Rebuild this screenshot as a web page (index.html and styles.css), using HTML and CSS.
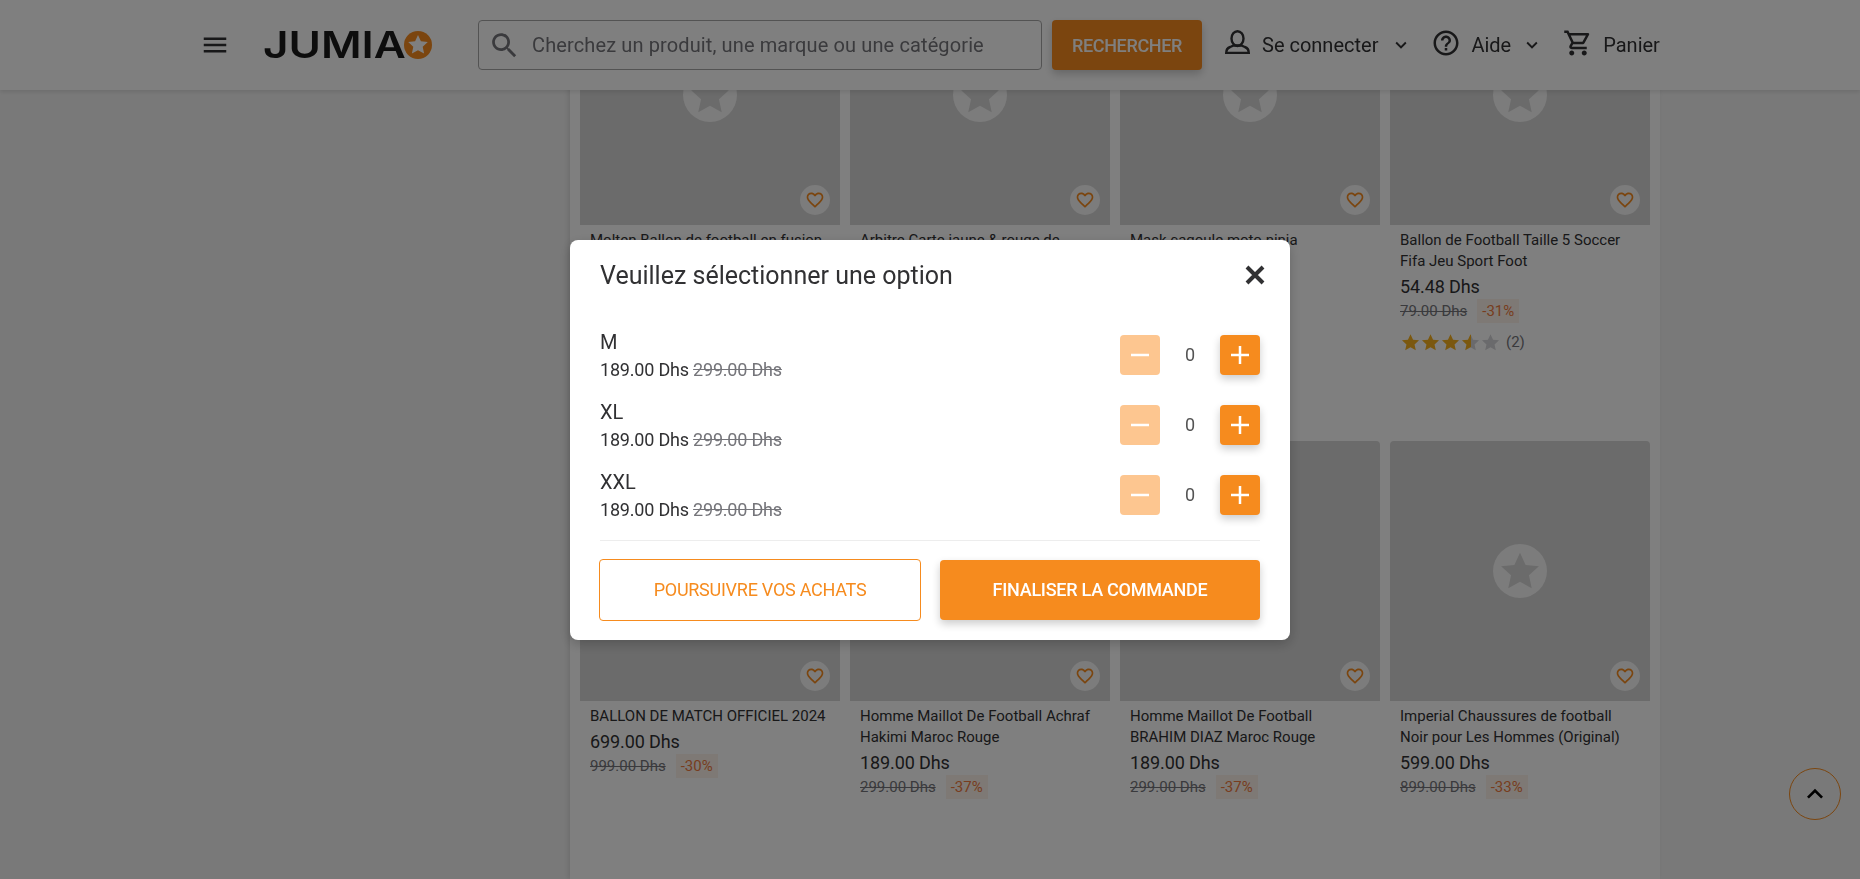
FILE: index.html
```html
<!DOCTYPE html>
<html lang="fr">
<head>
<meta charset="UTF-8">
<meta name="viewport" content="width=device-width, initial-scale=1.0">
<title>Jumia</title>
<link rel="stylesheet" href="styles.css">
</head>
<body>

<svg class="sprite" width="0" height="0">
<defs>
<linearGradient id="halfStar"><stop offset="50%" stop-color="#f6b01e"/><stop offset="50%" stop-color="#d4d4d8"/></linearGradient>
<symbol id="i-star" viewBox="0 0 24 24"><path d="M12 1.5l3.2 7 7.6.8-5.7 5.1 1.6 7.5-6.7-3.8-6.7 3.8 1.6-7.5L1.2 9.300l7.600-.8z"/></symbol>
<symbol id="i-heart" viewBox="0 0 24 24"><path d="M16.5 3c-1.740 0-3.410.81-4.500 2.090C10.910 3.810 9.240 3 7.500 3 4.420 3 2 5.420 2 8.500c0 3.780 3.400 6.860 8.550 11.540L12 21.350l1.450-1.320C18.600 15.360 22 12.280 22 8.500 22 5.420 19.580 3 16.500 3zm-4.400 15.550l-.1.1-.1-.1C7.140 14.240 4 11.390 4 8.500 4 6.500 5.500 5 7.500 5c1.540 0 3.040.99 3.570 2.360h1.870C13.460 5.990 14.960 5 16.500 5c2 0 3.500 1.500 3.500 3.500 0 2.890-3.140 5.740-7.900 10.050z"/></symbol>
<symbol id="i-chevron" viewBox="0 0 24 24"><path d="M16.590 8.590L12 13.170 7.410 8.590 6 10l6 6 6-6z"/></symbol>
<symbol id="i-minus" viewBox="0 0 18 18"><path d="M0 7.750h18v2.500H0z"/></symbol>
<symbol id="i-plus" viewBox="0 0 18 18"><path d="M0 7.750h7.750V0h2.500v7.750H18v2.500h-7.750V18h-2.500v-7.750H0z"/></symbol>
</defs>
</svg>

<header class="topbar">
<svg class="icon-menu" viewBox="0 0 24 24"><path d="M3 18h18v-2H3v2zm0-5h18v-2H3v2zm0-7v2h18V6H3z"/></svg>
<a class="logo">
<span class="logo-text">JUMIA</span>
<svg class="logo-star" viewBox="0 0 28 28"><circle cx="14" cy="14" r="14" fill="#f68b1e"/><path fill="#fff" d="M14 4l2.900 6.300 6.900.8-5.100 4.700 1.400 6.800-6.100-3.400-6.100 3.400 1.400-6.800-5.100-4.700 6.900-.8z"/></svg>
</a>
<div class="search">
<svg class="icon-search" viewBox="0 0 24 24"><path d="M15.500 14h-.79l-.28-.27C15.410 12.590 16 11.110 16 9.500 16 5.910 13.090 3 9.500 3S3 5.910 3 9.500 5.910 16 9.500 16c1.610 0 3.090-.59 4.230-1.570l.27.28v.79l5 4.990L20.490 19l-4.990-5zm-6 0C7.010 14 5 11.990 5 9.500S7.010 5 9.500 5 14 7.010 14 9.500 11.990 14 9.500 14z"/></svg>
<span class="search-text">Cherchez un produit, une marque ou une catégorie</span>
</div>
<button class="search-btn">RECHERCHER</button>
<div class="nav-item nav-account">
<svg class="icon-user" viewBox="0 0 25 24"><ellipse cx="12.500" cy="8.600" rx="6" ry="7.400" fill="none" stroke="#313133" stroke-width="2.400"/><path fill="none" stroke="#313133" stroke-width="2.400" d="M1.200 23c0-3 1-5 4-6l3.500-1.500h7.600l3.500 1.500c3 1 4 3 4 6z"/></svg>
<span>Se connecter</span>
<svg class="icon-chevron"><use href="#i-chevron"/></svg>
</div>
<div class="nav-item nav-help">
<svg class="icon-nav" viewBox="0 0 24 24"><path d="M11 18h2v-2h-2v2zm1-16C6.480 2 2 6.480 2 12s4.480 10 10 10 10-4.480 10-10S17.520 2 12 2zm0 18c-4.410 0-8-3.590-8-8s3.590-8 8-8 8 3.590 8 8-3.590 8-8 8zm0-14c-2.210 0-4 1.790-4 4h2c0-1.100.9-2 2-2s2 .9 2 2c0 2-3 1.750-3 5h2c0-2.250 3-2.500 3-5 0-2.210-1.790-4-4-4z"/></svg>
<span>Aide</span>
<svg class="icon-chevron"><use href="#i-chevron"/></svg>
</div>
<div class="nav-item nav-cart">
<svg class="icon-nav" viewBox="0 0 24 24"><path d="M15.550 13c.75 0 1.410-.41 1.750-1.030l3.580-6.490c.37-.66-.11-1.480-.87-1.480H5.210l-.94-2H1v2h2l3.600 7.590-1.350 2.440C4.520 15.370 5.480 17 7 17h12v-2H7l1.100-2h7.450zM6.160 6h12.150l-2.760 5H8.530L6.160 6zM7 18c-1.100 0-1.990.9-1.990 2S5.900 22 7 22s2-.9 2-2-.9-2-2-2zm10 0c-1.100 0-1.990.9-1.990 2s.89 2 1.990 2 2-.9 2-2-.9-2-2-2z"/></svg>
<span>Panier</span>
</div>
</header>

<div class="page">
<main class="panel">
<div class="grid">

<article class="card">
<div class="card-img"><span class="ph"><svg><use href="#i-star"/></svg></span><span class="fav"><svg><use href="#i-heart"/></svg></span></div>
<p class="card-title">Molten Ballon de football en fusion</p>
</article>

<article class="card">
<div class="card-img"><span class="ph"><svg><use href="#i-star"/></svg></span><span class="fav"><svg><use href="#i-heart"/></svg></span></div>
<p class="card-title">Arbitre Carte jaune &amp; rouge de</p>
</article>

<article class="card">
<div class="card-img"><span class="ph"><svg><use href="#i-star"/></svg></span><span class="fav"><svg><use href="#i-heart"/></svg></span></div>
<p class="card-title">Mask cagoule moto ninja</p>
</article>

<article class="card">
<div class="card-img"><span class="ph"><svg><use href="#i-star"/></svg></span><span class="fav"><svg><use href="#i-heart"/></svg></span></div>
<p class="card-title">Ballon de Football Taille 5 Soccer Fifa Jeu Sport Foot</p>
<p class="card-price">54.48 Dhs</p>
<div class="card-old"><s>79.00 Dhs</s><span class="badge">-31%</span></div>
<div class="rating">
<svg class="on"><use href="#i-star"/></svg>
<svg class="on"><use href="#i-star"/></svg>
<svg class="on"><use href="#i-star"/></svg>
<svg class="half"><use href="#i-star"/></svg>
<svg><use href="#i-star"/></svg>
<span>(2)</span>
</div>
</article>

<article class="card">
<div class="card-img"><span class="ph"><svg><use href="#i-star"/></svg></span><span class="fav"><svg><use href="#i-heart"/></svg></span></div>
<p class="card-title">BALLON DE MATCH OFFICIEL 2024</p>
<p class="card-price">699.00 Dhs</p>
<div class="card-old"><s>999.00 Dhs</s><span class="badge">-30%</span></div>
</article>

<article class="card">
<div class="card-img"><span class="ph"><svg><use href="#i-star"/></svg></span><span class="fav"><svg><use href="#i-heart"/></svg></span></div>
<p class="card-title">Homme Maillot De Football Achraf Hakimi Maroc Rouge</p>
<p class="card-price">189.00 Dhs</p>
<div class="card-old"><s>299.00 Dhs</s><span class="badge">-37%</span></div>
</article>

<article class="card">
<div class="card-img"><span class="ph"><svg><use href="#i-star"/></svg></span><span class="fav"><svg><use href="#i-heart"/></svg></span></div>
<p class="card-title">Homme Maillot De Football BRAHIM DIAZ Maroc Rouge</p>
<p class="card-price">189.00 Dhs</p>
<div class="card-old"><s>299.00 Dhs</s><span class="badge">-37%</span></div>
</article>

<article class="card">
<div class="card-img"><span class="ph"><svg><use href="#i-star"/></svg></span><span class="fav"><svg><use href="#i-heart"/></svg></span></div>
<p class="card-title">Imperial Chaussures de football Noir pour Les Hommes (Original)</p>
<p class="card-price">599.00 Dhs</p>
<div class="card-old"><s>899.00 Dhs</s><span class="badge">-33%</span></div>
</article>

</div>
</main>
</div>

<button class="to-top"><svg viewBox="0 0 24 24"><path d="M12 8l-6 6 1.410 1.410L12 10.830l4.590 4.580L18 14z"/></svg></button>

<div class="overlay">
<div class="modal">
<div class="modal-head">
<h2>Veuillez sélectionner une option</h2>
<svg class="modal-close" viewBox="0 0 20 20"><path d="M2 2l16 16M18 2L2 18"/></svg>
</div>

<div class="option">
<div class="option-info"><p class="option-name">M</p><p class="option-price">189.00 Dhs <s>299.00 Dhs</s></p></div>
<div class="stepper">
<button class="step step-off"><svg><use href="#i-minus"/></svg></button>
<span class="qty">0</span>
<button class="step"><svg><use href="#i-plus"/></svg></button>
</div>
</div>

<div class="option">
<div class="option-info"><p class="option-name">XL</p><p class="option-price">189.00 Dhs <s>299.00 Dhs</s></p></div>
<div class="stepper">
<button class="step step-off"><svg><use href="#i-minus"/></svg></button>
<span class="qty">0</span>
<button class="step"><svg><use href="#i-plus"/></svg></button>
</div>
</div>

<div class="option">
<div class="option-info"><p class="option-name">XXL</p><p class="option-price">189.00 Dhs <s>299.00 Dhs</s></p></div>
<div class="stepper">
<button class="step step-off"><svg><use href="#i-minus"/></svg></button>
<span class="qty">0</span>
<button class="step"><svg><use href="#i-plus"/></svg></button>
</div>
</div>

<div class="modal-foot">
<button class="btn-outline">POURSUIVRE VOS ACHATS</button>
<button class="btn-fill">FINALISER LA COMMANDE</button>
</div>
</div>
</div>

</body>
</html>
```

FILE: styles.css
```css
* {
box-sizing: border-box;
}

body {
margin: 0;
height: 879px;
overflow: hidden;
font-family: Roboto, "Liberation Sans", sans-serif;
background-color: #f3f3f3;
color: #313133;
}

p, h2 {
margin: 0;
}

button {
font-family: inherit;
border: none;
cursor: pointer;
}

.sprite {
position: absolute;
}

/* top bar */
.topbar {
position: fixed;
top: 0;
left: 0;
right: 0;
z-index: 5;
height: 90px;
display: flex;
align-items: center;
padding-left: 200px;
background-color: #fff;
box-shadow: 0 2px 4px rgba(0, 0, 0, .1);
}

.icon-menu {
width: 30px;
height: 30px;
margin-right: 33px;
fill: #313133;
}

.logo {
display: flex;
align-items: center;
width: 169px;
height: 30px;
margin-right: 46px;
}

.logo-text {
font-family: Inter, sans-serif;
font-weight: 600;
font-size: 37px;
line-height: 30px;
width: 142px;
color: #1a1a1a;
transform: scaleX(1.19);
transform-origin: left center;
}

.logo-star {
width: 28px;
height: 28px;
flex: none;
}

.search {
width: 564px;
height: 50px;
display: flex;
align-items: center;
padding-left: 9px;
border: 1px solid #a6a6a6;
border-radius: 4px;
margin-right: 10px;
}

.icon-search {
width: 33px;
height: 33px;
margin-right: 11px;
fill: #75757a;
flex: none;
}

.search-text {
font-size: 20px;
letter-spacing: .12px;
color: #75757a;
white-space: nowrap;
}

.search-btn {
width: 150px;
height: 50px;
border-radius: 4px;
background-color: #f68b1e;
color: #fff;
font-size: 18px;
letter-spacing: -.36px;
font-weight: 500;
box-shadow: 0 4px 8px rgba(0, 0, 0, .2);
margin-right: 23px;
}

.nav-item {
display: flex;
align-items: center;
font-size: 20px;
}

.icon-user {
width: 25px;
height: 24px;
margin-right: 12px;
margin-top: -6px;
}

.icon-nav {
width: 30px;
height: 30px;
fill: #313133;
margin-top: -4px;
margin-right: 10px;
}

.icon-chevron {
width: 22px;
height: 22px;
fill: #313133;
margin-left: 12px;
}

.nav-account {
margin-right: 19px;
}

.nav-help {
margin-right: 20px;
}

.nav-help .icon-chevron {
margin-left: 10px;
}

/* page */
.page {
display: flex;
padding-left: 570px;
}

.panel {
width: 1090px;
height: 879px;
padding: 0 10px;
background-color: #fff;
box-shadow: -2px 0 5px rgba(0, 0, 0, .1);
}

.grid {
display: grid;
grid-template-columns: repeat(4, 260px);
grid-template-rows: repeat(2, 476px);
column-gap: 10px;
margin-top: -35px;
}

.card-img {
position: relative;
height: 260px;
display: flex;
align-items: center;
justify-content: center;
background-color: #d6d6d6;
border-radius: 4px 4px 0 0;
}

.ph {
width: 54px;
height: 54px;
display: flex;
align-items: center;
justify-content: center;
border-radius: 50%;
background-color: #f8f8f8;
}

.ph svg {
width: 42px;
height: 42px;
fill: #d6d6d6;
}

.fav {
position: absolute;
right: 10px;
bottom: 10px;
width: 30px;
height: 30px;
display: flex;
align-items: center;
justify-content: center;
border-radius: 50%;
background-color: #f8f8f8;
}

.fav svg {
width: 20px;
height: 20px;
fill: #f68b1e;
}

.card-title {
font-size: 15px;
line-height: 21px;
padding: 5px 10px 0;
}

.card-price {
font-size: 18px;
letter-spacing: -.1px;
line-height: 21.5px;
padding: 4px 10px .5px;
}

.card-old {
display: flex;
align-items: center;
height: 25px;
padding: 0 10px;
font-size: 15px;
color: #75757a;
}

.badge {
display: flex;
align-items: center;
height: 24px;
margin-left: 10px;
padding: 0 5px;
background-color: #fdf3ea;
color: #ef7b3f;
}

.rating {
display: flex;
align-items: center;
height: 20px;
margin-top: 9px;
padding: 0 11px;
font-size: 15px;
color: #75757a;
}

.rating svg {
width: 19px;
height: 19px;
margin-right: 1px;
fill: #d4d4d8;
}

.rating .on {
fill: #f6b01e;
}

.rating .half {
fill: url(#halfStar);
}

.rating span {
margin-left: 5px;
}

.to-top {
position: fixed;
right: 19px;
bottom: 59px;
z-index: 6;
width: 52px;
height: 52px;
display: flex;
align-items: center;
justify-content: center;
padding: 0;
border: 1px solid #f68b1e;
border-radius: 50%;
background: transparent;
}

.to-top svg {
width: 32px;
height: 32px;
display: block;
fill: #000;
}

/* modal */
.overlay {
position: fixed;
top: 0;
right: 0;
bottom: 0;
left: 0;
z-index: 10;
display: flex;
align-items: center;
justify-content: center;
background-color: rgba(0, 0, 0, .5);
}

.modal {
width: 720px;
height: 400px;
padding: 0 30px;
background-color: #fff;
border-radius: 8px;
box-shadow: 0 4px 12px rgba(0, 0, 0, .2);
}

.modal-head {
display: flex;
align-items: center;
justify-content: space-between;
height: 70px;
margin-bottom: 10px;
}

.modal-head h2 {
font-size: 25px;
font-weight: 400;
padding-top: 2px;
}

.modal-close {
width: 20px;
height: 20px;
margin-right: -5px;
fill: none;
stroke: #313133;
stroke-width: 4;
}

.option {
display: flex;
align-items: center;
justify-content: space-between;
height: 70px;
}

.option-info {
padding-top: 2px;
}

.option-name {
font-size: 20px;
line-height: 27px;
}

.option-price {
font-size: 18px;
line-height: 27px;
letter-spacing: -.2px;
}

.option-price s {
color: #75757a;
}

.stepper {
display: flex;
align-items: center;
}

.step {
width: 40px;
height: 40px;
padding: 11px;
border-radius: 4px;
background-color: #f68b1e;
box-shadow: 0 4px 8px rgba(0, 0, 0, .2);
}

.step svg {
width: 18px;
height: 18px;
display: block;
fill: #fff;
}

.step-off {
background-color: #fdc690;
box-shadow: none;
}

.qty {
width: 60px;
text-align: center;
font-size: 18px;
color: #545454;
}

.modal-foot {
display: flex;
align-items: center;
justify-content: space-between;
margin-top: 10px;
padding-top: 18px;
border-top: 1px solid #ededed;
}

.btn-outline {
width: 322px;
height: 62px;
margin-left: -1px;
border: 1px solid #f68b1e;
border-radius: 4px;
background-color: #fff;
color: #f68b1e;
font-size: 18px;
letter-spacing: -.26px;
}

.btn-fill {
width: 320px;
height: 60px;
border-radius: 4px;
background-color: #f68b1e;
color: #fff;
font-size: 18px;
letter-spacing: -.26px;
font-weight: 500;
box-shadow: 0 4px 8px rgba(0, 0, 0, .2);
}
```
